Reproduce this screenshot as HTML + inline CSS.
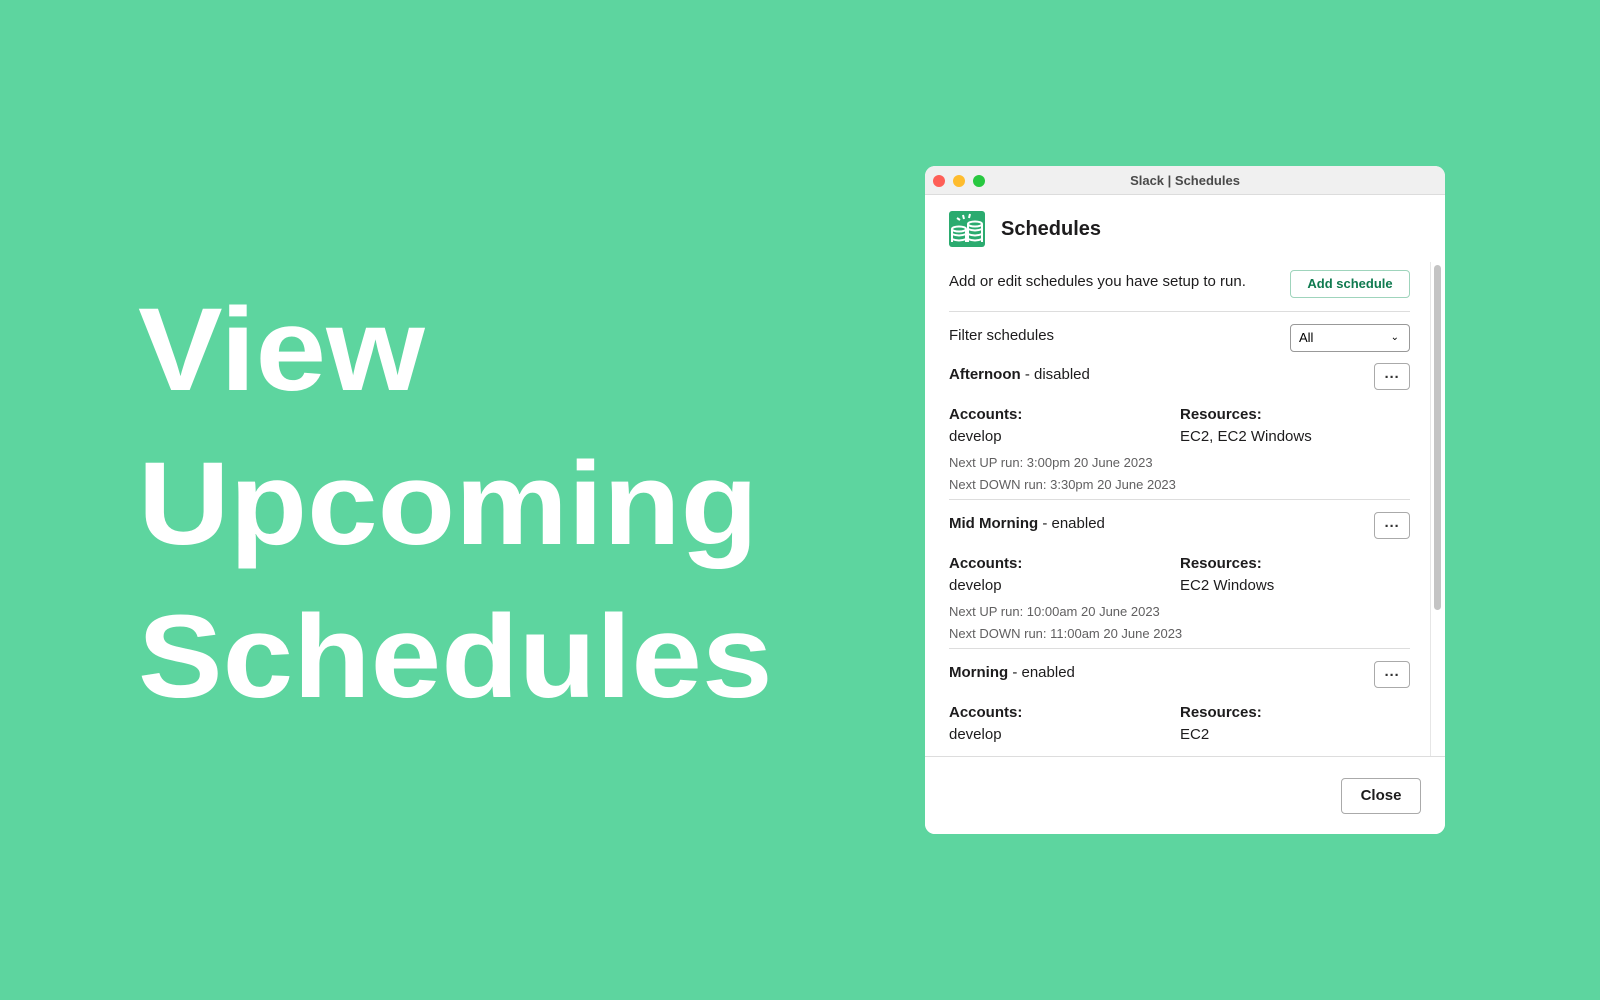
<!DOCTYPE html>
<html><head><style>
*{margin:0;padding:0;box-sizing:border-box}
body{width:1600px;height:1000px;background:#5dd59f;font-family:"Liberation Sans",sans-serif;position:relative;overflow:hidden}
.big{position:absolute;left:138px;color:#fff;font-weight:bold;font-size:118px;line-height:1;letter-spacing:0;white-space:nowrap;transform:scaleX(1.075);transform-origin:0 0}
.win{position:absolute;left:925px;top:166px;width:520px;height:668px;background:#fff;border-radius:10px;overflow:hidden}
.tb{height:29px;background:#f0f0f0;border-bottom:1px solid #dcdcdc;position:relative;text-align:center;font-size:13px;font-weight:bold;color:#4a4a4a;line-height:29px}
.dot{position:absolute;top:9px;width:12px;height:12px;border-radius:50%}
.a{position:absolute;white-space:nowrap;color:#1d1c1d;font-size:15px}
.g{color:#616061;font-size:13px}
.b{font-weight:bold}
.btn{position:absolute;border:1px solid #bbb;border-radius:4px;background:#fff}
.hr{position:absolute;left:24px;width:461px;height:1px;background:#ddd}
.more{position:absolute;left:449px;width:36px;height:27px;border:1px solid #aaa;border-radius:4px;text-align:center;font-size:15px;line-height:27px;font-weight:bold;color:#333;letter-spacing:0}
</style></head><body>
<div class="big" style="top:291px">View</div>
<div class="big" style="top:445px">Upcoming</div>
<div class="big" style="top:598px">Schedules</div>
<div class="win">
<div class="tb">Slack | Schedules
<div class="dot" style="left:8px;background:#fe5f57"></div>
<div class="dot" style="left:28px;background:#febc2e"></div>
<div class="dot" style="left:48px;background:#28c840"></div>
</div>
<svg style="position:absolute;left:24px;top:45px" width="36" height="36" viewBox="0 0 36 36"><rect width="36" height="36" rx="3" fill="#2bab6f"/><g fill="none" stroke="#fff" stroke-width="2"><ellipse cx="10" cy="18" rx="7" ry="2.5"/><ellipse cx="26" cy="13" rx="7" ry="2.5"/><path d="M3 18v13M17 18v13M3 23q7 3 14 0M3 28q7 3 14 0M19 13v18M33 13v18M19 18q7 3 14 0M19 23q7 3 14 0M19 28q7 3 14 0M14 4l1 4M21 3l-1 4M8 7l3 2"/></g></svg>
<div class="a b" style="left:76px;top:45px;font-size:20px;line-height:36px">Schedules</div>
<div class="a" style="left:24px;top:107px">Add or edit schedules you have setup to run.</div>
<div class="btn" style="left:365px;top:104px;width:120px;height:28px;border-color:#9fd4bc;color:#0f7a4f;font-size:13px;font-weight:bold;text-align:center;line-height:26px">Add schedule</div>
<div class="hr" style="top:145px"></div>
<div class="a" style="left:24px;top:161px">Filter schedules</div>
<div class="btn" style="left:365px;top:158px;width:120px;height:28px;border-color:#999;font-size:13px;line-height:26px;padding-left:8px">All<span style="position:absolute;right:10px;top:0;font-size:10px">&#8964;</span></div>
<div class="a" style="left:24px;top:200px"><b>Afternoon</b> - disabled</div>
<div class="more" style="top:197px">···</div>
<div class="a b" style="left:24px;top:240px">Accounts:</div><div class="a b" style="left:255px;top:240px">Resources:</div>
<div class="a" style="left:24px;top:262px">develop</div><div class="a" style="left:255px;top:262px">EC2, EC2 Windows</div>
<div class="a g" style="left:24px;top:289px">Next UP run: 3:00pm 20 June 2023</div>
<div class="a g" style="left:24px;top:311px">Next DOWN run: 3:30pm 20 June 2023</div>
<div class="hr" style="top:333px"></div>
<div class="a" style="left:24px;top:349px"><b>Mid Morning</b> - enabled</div>
<div class="more" style="top:346px">···</div>
<div class="a b" style="left:24px;top:389px">Accounts:</div><div class="a b" style="left:255px;top:389px">Resources:</div>
<div class="a" style="left:24px;top:411px">develop</div><div class="a" style="left:255px;top:411px">EC2 Windows</div>
<div class="a g" style="left:24px;top:438px">Next UP run: 10:00am 20 June 2023</div>
<div class="a g" style="left:24px;top:460px">Next DOWN run: 11:00am 20 June 2023</div>
<div class="hr" style="top:482px"></div>
<div class="a" style="left:24px;top:498px"><b>Morning</b> - enabled</div>
<div class="more" style="top:495px">···</div>
<div class="a b" style="left:24px;top:538px">Accounts:</div><div class="a b" style="left:255px;top:538px">Resources:</div>
<div class="a" style="left:24px;top:560px">develop</div><div class="a" style="left:255px;top:560px">EC2</div>
<div style="position:absolute;left:505px;top:96px;width:1px;height:494px;background:#e6e6e6"></div>
<div style="position:absolute;left:509px;top:99px;width:7px;height:345px;border-radius:4px;background:#c4c4c4"></div>
<div style="position:absolute;left:0;top:590px;width:520px;height:78px;background:#fff;border-top:1px solid #ddd"></div>
<div class="btn" style="left:416px;top:612px;width:80px;height:36px;border-color:#aaa;font-size:15px;font-weight:bold;text-align:center;line-height:34px;color:#1d1c1d">Close</div>
</div>
</body></html>
